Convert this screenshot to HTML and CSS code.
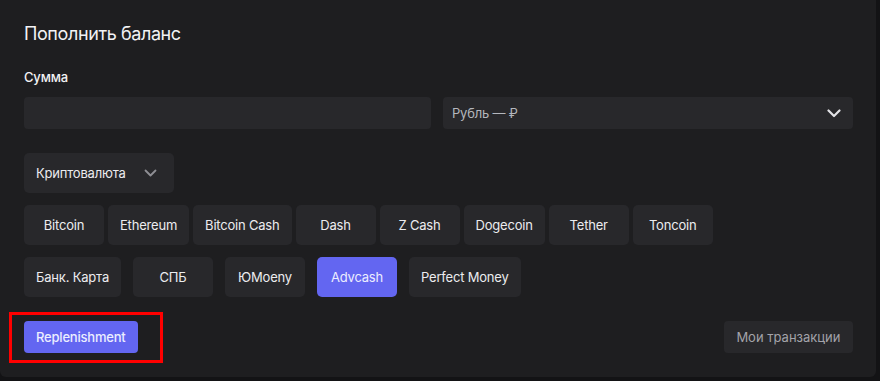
FILE: index.html
```html
<!DOCTYPE html>
<html lang="ru">
<head>
<meta charset="utf-8">
<link rel="stylesheet" href="styles.css">
</head>
<body>
<div class="card">
  <h1 class="title">Пополнить баланс</h1>
  <div class="label">Сумма</div>
  <div class="amount-row">
    <div class="input"></div>
    <div class="select">
      <span>Рубль — ₽</span>
      <svg class="chev-big" width="14" height="9" viewBox="0 0 14 9"><path d="M1.5 1.5 L7 7 L12.5 1.5" fill="none" stroke="#e2e2e6" stroke-width="2.2" stroke-linecap="round" stroke-linejoin="round"/></svg>
    </div>
  </div>
  <div class="dropdown">
    <span>Криптовалюта</span>
    <svg class="chev-small" width="13" height="8" viewBox="0 0 13 8"><path d="M1.5 1.5 L6.5 6.5 L11.5 1.5" fill="none" stroke="#8f8f94" stroke-width="1.8" stroke-linecap="round" stroke-linejoin="round"/></svg>
  </div>
  <div class="methods">
    <div class="row row-crypto">
      <button class="btn">Bitcoin</button>
      <button class="btn">Ethereum</button>
      <button class="btn">Bitcoin Cash</button>
      <button class="btn">Dash</button>
      <button class="btn">Z Cash</button>
      <button class="btn">Dogecoin</button>
      <button class="btn">Tether</button>
      <button class="btn">Toncoin</button>
    </div>
    <div class="row row-fiat">
      <button class="btn">Банк. Карта</button>
      <button class="btn">СПБ</button>
      <button class="btn">ЮMoeny</button>
      <button class="btn active">Advcash</button>
      <button class="btn">Perfect Money</button>
    </div>
  </div>
  <div class="footer">
    <button class="primary">Replenishment</button>
    <button class="secondary">Мои транзакции</button>
  </div>
  <div class="highlight"></div>
</div>
</body>
</html>
```
FILE: styles.css
```css
* { box-sizing: border-box; }
html, body { margin: 0; padding: 0; }
body {
  background: #131315;
  font-family: Inter, "Noto Sans", sans-serif;
  width: 880px;
  height: 381px;
  overflow: hidden;
}
.card {
  position: relative;
  width: 876px;
  height: 377px;
  background: #1e1e20;
  border-radius: 0 0 6px 6px;
  padding: 22px 23px 24px 24px;
  display: flex;
  flex-direction: column;
}
.title {
  margin: 0;
  font-size: 18px;
  line-height: 24px;
  font-weight: 400;
  letter-spacing: -0.4px;
  color: #f2f2f4;
}
.label {
  margin-top: 23px;
  font-size: 13px;
  line-height: 16px;
  font-weight: 500;
  letter-spacing: -0.2px;
  color: #f2f2f4;
}
.amount-row {
  margin-top: 12px;
  display: flex;
  gap: 12px;
}
.input {
  width: 407px;
  height: 32px;
  background: #28282b;
  border-radius: 4px;
}
.select {
  flex: 1;
  height: 32px;
  background: #28282b;
  border-radius: 4px;
  display: flex;
  align-items: center;
  justify-content: space-between;
  padding: 0 12px 0 9px;
  font-size: 13px;
  letter-spacing: -0.2px;
  color: #b4b7bd;
}
.chev-big { display: block; }
.dropdown {
  margin-top: 24px;
  width: 150px;
  height: 40px;
  background: #28282b;
  border-radius: 5px;
  display: flex;
  align-items: center;
  justify-content: space-between;
  padding: 0 17px 0 12px;
  font-size: 13px;
  font-weight: 400;
  letter-spacing: -0.2px;
  color: #ececef;
}
.chev-small { display: block; }
.methods {
  margin-top: 12px;
  display: flex;
  flex-direction: column;
  gap: 12px;
}
.row { display: flex; }
.row-crypto { gap: 4px; }
.row-fiat { gap: 12px; }
.btn {
  height: 40px;
  min-width: 80px;
  padding: 0 12px;
  border: 0;
  border-radius: 5px;
  background: #28282b;
  color: #ececef;
  font-family: inherit;
  font-size: 13px;
  font-weight: 400;
  letter-spacing: -0.2px;
  white-space: nowrap;
}
.btn.active {
  background: #6366f1;
  color: #ecedff;
}
.footer {
  margin-top: 24px;
  display: flex;
  justify-content: space-between;
  align-items: center;
}
.primary, .secondary {
  height: 32px;
  padding: 0 12px;
  border: 0;
  border-radius: 4px;
  font-family: inherit;
  font-size: 13px;
  white-space: nowrap;
}
.primary {
  background: #6366f1;
  color: #eceeff;
  font-weight: 500;
  letter-spacing: -0.2px;
}
.secondary {
  padding: 0 12.5px;
  background: #28282b;
  color: #a3a3a9;
  font-weight: 400;
}
.highlight {
  position: absolute;
  left: 9px;
  top: 312px;
  width: 154px;
  height: 51px;
  border: 3px solid #ff0000;
}
```
